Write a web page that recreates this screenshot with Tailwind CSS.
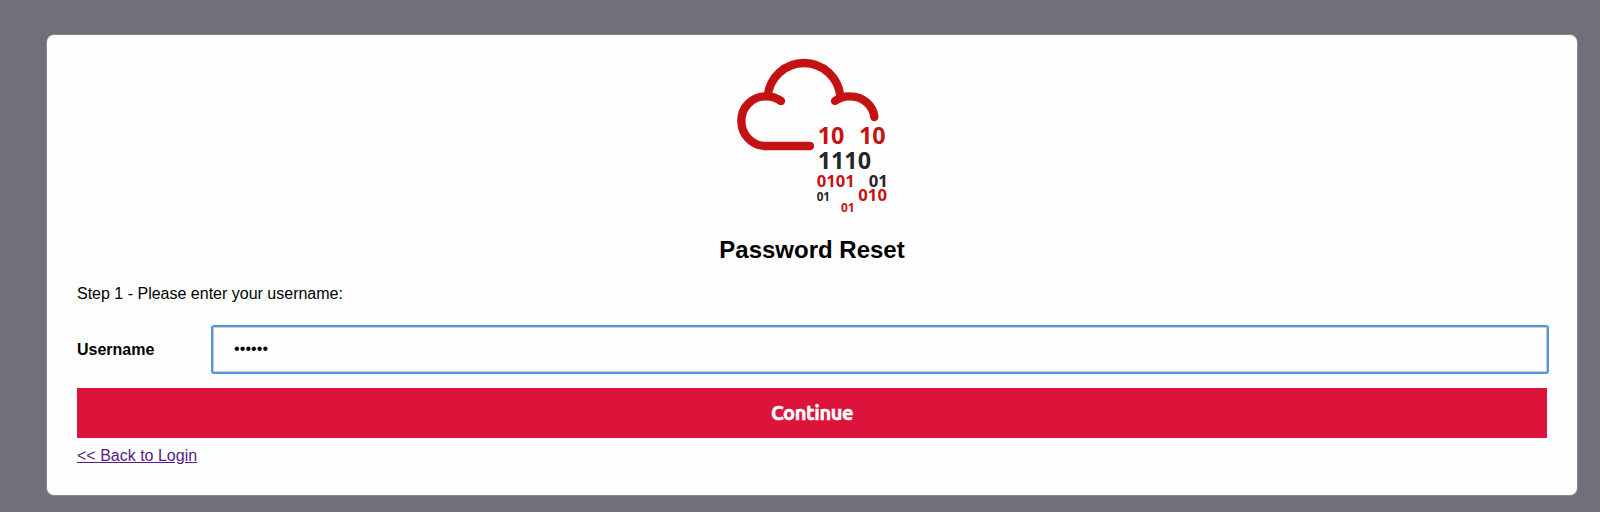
<!DOCTYPE html>
<html lang="en">
<head>
<meta charset="utf-8">
<title>Password Reset</title>
<script src="https://cdn.jsdelivr.net/npm/@tailwindcss/browser@4"></script>
</head>
<body class="h-screen overflow-hidden bg-[#70707c] pt-[34px] pl-[46px] font-['Liberation_Sans',Arial,sans-serif] text-base text-black">
<main class="flex h-[462px] w-[1532px] flex-col rounded-lg border border-[#888888] bg-[#fefefe] px-[30px] pt-[15px]">
  <svg class="ml-[643px] block h-[170px] w-[180px] shrink-0" viewBox="0 0 540 510" role="img" aria-label="Cloud logo">
    <g fill="none" stroke="#c41111" stroke-width="25" stroke-linecap="round" stroke-linejoin="round">
      <path d="M183 153A76 76 0 0 0 138 139C96 139 64 172 64 213S96 288 138 288H270"/>
      <path stroke-linecap="butt" d="M143 139A109.4 109.4 0 0 1 361 139"/>
      <path d="M345 153A72 72 0 0 1 390 139C431 139 460 169 463 201"/>
    </g>
    <g font-family="'Open Sans','Noto Sans',sans-serif" font-weight="700" fill="#c41217">
      <text x="293" y="281" font-size="70">10</text>
      <text x="417" y="281" font-size="70">10</text>
      <text x="293" y="358" font-size="70" fill="#262626">1110</text>
      <text x="290" y="411" font-size="50">0101</text>
      <text x="446" y="411" font-size="50" fill="#262626">01</text>
      <text x="290" y="453" font-size="35" fill="#262626">01</text>
      <text x="415" y="453" font-size="50">010</text>
      <text x="363" y="486" font-size="36">01</text>
    </g>
  </svg>
  <h1 class="mt-4 text-center text-2xl leading-7 font-bold">Password Reset</h1>
  <p class="mt-[21px] leading-[18px]">Step 1 - Please enter your username:</p>
  <form class="mt-6 flex flex-col">
    <div class="flex h-[45px] items-center">
      <label for="username" class="w-[136px] font-bold">Username</label>
      <input id="username" type="text" value="••••••" class="h-[45px] flex-1 rounded-[1px] border border-[#cccccc] bg-[#fefefe] px-5 pb-0.5 tracking-[0.1px] outline-2 outline-[#5294e2]">
    </div>
    <button type="button" class="mt-4 h-[50px] bg-[#dc143c] font-['Ubuntu','Noto_Sans',sans-serif] text-[20px] font-bold text-white"><span class="inline-block tracking-[-0.4px] [-webkit-text-stroke:0.5px_white]">Continue</span></button>
  </form>
  <a href="#" class="mt-[9px] self-start leading-[18px] text-[#551a8b] underline">&lt;&lt; Back to Login</a>
</main>
</body>
</html>
